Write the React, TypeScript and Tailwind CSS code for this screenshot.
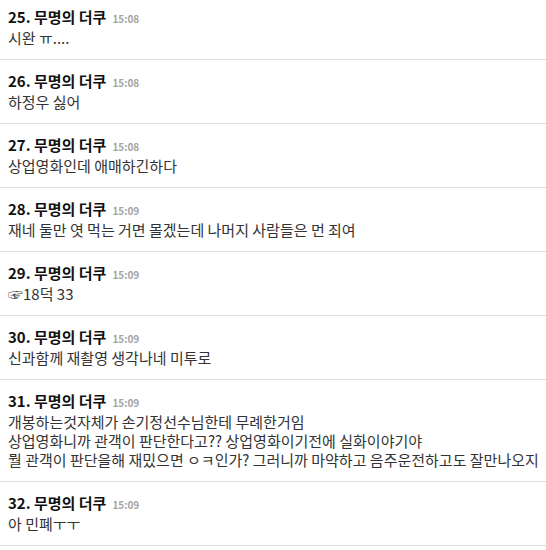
type Comment = {
  no: number;
  time: string;
  lines: string[];
};

const COMMENTS: Comment[] = [
  { no: 25, time: "15:08", lines: ["시완 ㅠ...."] },
  { no: 26, time: "15:08", lines: ["하정우 싫어"] },
  { no: 27, time: "15:08", lines: ["상업영화인데 애매하긴하다"] },
  { no: 28, time: "15:09", lines: ["재네 둘만 엿 먹는 거면 몰겠는데 나머지 사람들은 먼 죄여"] },
  { no: 29, time: "15:09", lines: ["☞18덕 33"] },
  { no: 30, time: "15:09", lines: ["신과함께 재촬영 생각나네 미투로"] },
  {
    no: 31,
    time: "15:09",
    lines: [
      "개봉하는것자체가 손기정선수님한테 무례한거임",
      "상업영화니까 관객이 판단한다고?? 상업영화이기전에 실화이야기야",
      "뭘 관객이 판단을해 재밌으면 ㅇㅋ인가? 그러니까 마약하고 음주운전하고도 잘만나오지",
    ],
  },
  { no: 32, time: "15:09", lines: ["아 민폐ㅜㅜ"] },
];

function CommentRow({ c }: { c: Comment }) {
  return (
    <div className="border-b border-[#dddddd] px-2 pt-[11px] pb-[12px]">
      <div className="flex h-[20px] items-baseline gap-[6px] overflow-hidden leading-[20px]">
        <span className="text-[15px] font-bold text-[#111111]">
          {c.no}. 무명의 더쿠
        </span>
        <span className="text-[10px] font-bold text-[#a3a3a3]">{c.time}</span>
      </div>
      <div className="mt-[1px] text-[15px] leading-[19px] text-[#333333] whitespace-nowrap">
        {c.lines.map((l, i) => (
          <p key={i} className="h-[19px]">
            {l}
          </p>
        ))}
      </div>
    </div>
  );
}

export default function App() {
  return (
    <div
      className="h-[550px] w-[546px] overflow-hidden bg-white"
      style={{ fontFamily: '"Noto Sans CJK KR", "Noto Sans", sans-serif' }}
    >
      <div className="-mt-1">
        {COMMENTS.map((c) => (
          <CommentRow key={c.no} c={c} />
        ))}
      </div>
    </div>
  );
}
